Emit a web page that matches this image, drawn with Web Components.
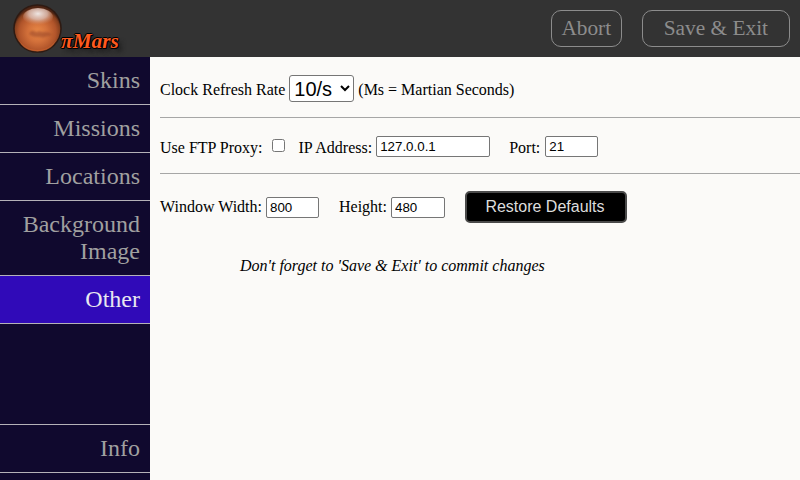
<!DOCTYPE html>
<html>
<head>
<meta charset="utf-8">
<style>
html, body { margin: 0; height: 100%; }
body { width: 800px; height: 480px; overflow: hidden; font-family: "Liberation Serif", serif; }
</style>
</head>
<body>
<mars-app></mars-app>
<script>
class MarsLogo extends HTMLElement {
  constructor() {
    super();
    this.attachShadow({ mode: "open" }).innerHTML = `
      <style>
        :host { display: flex; align-items: flex-start; width: 130px; height: 57px; box-sizing: border-box; padding: 4px 0 0 13px; }
        svg { display: block; flex: none; }
        span {
          margin: 26px 0 0 -1px;
          font: italic bold 21.33px/22px "Liberation Serif", serif;
          color: #ff5a1e;
          text-shadow: 1px 0 0 #000, -1px 0 0 #000, 0 1px 0 #000, 0 -1px 0 #000, 1px 1px 0 #000, 4px 4px 4px #1a1a1a;
        }
      </style>
      <svg width="49" height="49" viewBox="0 0 49 49">
        <defs>
          <radialGradient id="body" cx="50%" cy="58%" r="54%">
            <stop offset="0" stop-color="#ea8a48"/>
            <stop offset=".4" stop-color="#d2703a"/>
            <stop offset=".75" stop-color="#b0542a"/>
            <stop offset=".92" stop-color="#86401e"/>
            <stop offset="1" stop-color="#4e2413"/>
          </radialGradient>
          <radialGradient id="shine" cx="50%" cy="32%" r="62%">
            <stop offset="0" stop-color="#eee6e3"/>
            <stop offset=".5" stop-color="#dcc0b6" stop-opacity=".8"/>
            <stop offset="1" stop-color="#d08f6e" stop-opacity="0"/>
          </radialGradient>
          <filter id="soft" x="-20%" y="-20%" width="140%" height="140%"><feGaussianBlur stdDeviation=".8"/></filter>
        </defs>
        <circle cx="24.5" cy="24.5" r="24.3" fill="#2e1a12"/>
        <circle cx="24.5" cy="24.5" r="22.8" fill="url(#body)"/>
        <ellipse cx="25" cy="13" rx="15" ry="9" fill="url(#shine)"/>
        <g fill="#9c4a2a" opacity=".6" filter="url(#soft)">
          <path d="M16 30c1-3 3-4 5-3l2 1 3-1 3 1 4 0c2 0 5 1 6 3-2 1-5 1-7 2-3 1-5 0-8 0s-6-1-8-3z"/>
        </g>
        <path d="M6 36c4 6 10 10 18.500 10S39 42 43 36c-3 8-10 11.500-18.500 11.500S9 44 6 36z" fill="#d0662e" opacity=".6"/>
      </svg>
      <span>πMars</span>`;
  }
}
customElements.define("mars-logo", MarsLogo);

class HeaderButton extends HTMLElement {
  constructor() {
    super();
    this.attachShadow({ mode: "open" }).innerHTML = `
      <style>
        :host {
          display: block; box-sizing: border-box; height: 37px; padding: 0 9.6px;
          border: 1px solid #8c8c8c; border-radius: 10px;
          color: #8c8c8c; font: 21.33px/34px "Liberation Serif", serif;
        }
      </style>
      <slot></slot>`;
  }
}
customElements.define("header-button", HeaderButton);

class TopBar extends HTMLElement {
  constructor() {
    super();
    this.attachShadow({ mode: "open" }).innerHTML = `
      <style>
        :host { display: flex; align-items: center; height: 57px; background: #333; }
        .actions { display: flex; gap: 20px; margin-left: auto; padding: 0 10px 0 0; margin-top: -1px; }
        header-button:last-child { padding: 0 21px; }
      </style>
      <mars-logo></mars-logo>
      <div class="actions">
        <header-button>Abort</header-button>
        <header-button>Save &amp; Exit</header-button>
      </div>`;
  }
}
customElements.define("top-bar", TopBar);

class NavItem extends HTMLElement {
  constructor() {
    super();
    this.attachShadow({ mode: "open" }).innerHTML = `
      <style>
        :host {
          display: block; box-sizing: border-box; padding: 10px;
          border-bottom: 1px solid #b5b2b8;
          color: #a0a0a0; text-align: right; font: 24px/27px "Liberation Serif", serif;
        }
        :host([selected]) { background: #300ab8; color: #e8e8f0; }
      </style>
      <slot></slot>`;
  }
}
customElements.define("nav-item", NavItem);

class SideNav extends HTMLElement {
  constructor() {
    super();
    this.attachShadow({ mode: "open" }).innerHTML = `
      <style>
        :host { display: flex; flex-direction: column; flex: none; width: 150px; background: #10092e; }
        .space { flex: 1; border-bottom: 1px solid #b5b2b8; }
        .info { margin-bottom: 7px; }
      </style>
      <nav-item>Skins</nav-item>
      <nav-item>Missions</nav-item>
      <nav-item>Locations</nav-item>
      <nav-item>Background Image</nav-item>
      <nav-item selected>Other</nav-item>
      <div class="space"></div>
      <nav-item class="info">Info</nav-item>`;
  }
}
customElements.define("side-nav", SideNav);

class SettingRow extends HTMLElement {
  constructor() {
    super();
    this.attachShadow({ mode: "open" }).innerHTML = `
      <style>
        :host { display: flex; align-items: center; white-space: nowrap; font: 16px/18px "Liberation Serif", serif; color: #000; }
      </style>
      <slot></slot>`;
  }
}
customElements.define("setting-row", SettingRow);

class OtherSettings extends HTMLElement {
  constructor() {
    super();
    this.attachShadow({ mode: "open" }).innerHTML = `
      <style>
        :host { display: block; flex: 1; background: #fbfaf8; padding: 18px 0 0 10px; font: 16px/18px "Liberation Serif", serif; }
        hr { height: 1px; margin: 0; border: 0; background: #a6a6a6; }
        .first { height: 27px; margin-bottom: 15px; }
        .first span { padding-top: 2px; }
        .second { height: 21px; margin: 18px 0 16px; }
        .second span { padding-top: 2px; }
        .third { height: 32px; margin-top: 17px; }
        input[type=text] {
          box-sizing: border-box; height: 21px; padding: 1px 3px; margin: 0;
          border: 1px solid #767676; border-radius: 2px; background: #fff;
          font: 13.33px "Liberation Sans", Arial, sans-serif; color: #000;
        }
        input[type=checkbox] { width: 13px; height: 13px; margin: 0 14px 3px 9px; }
        select {
          width: 65px; height: 27px; margin: 0 4px 0 4px; padding: 0;
          font: 20px "Liberation Sans", Arial, sans-serif; color: #000;
          background: #fff; border: 1px solid #767676; border-radius: 3px;
        }
        .lbl { margin-right: 4px; }
        button {
          box-sizing: border-box; width: 162px; height: 32px; margin-left: 20px; padding: 0 2px 0 0;
          background: #000; color: #ddd; border: 2px solid #4a4a4a; border-radius: 5px;
          font: 16px "Liberation Sans", Arial, sans-serif;
        }
        p { margin: 34px 0 0 80px; font-style: italic; }
      </style>
      <setting-row class="first">
        <span>Clock Refresh Rate</span>
        <select><option>10/s</option></select>
        <span>(Ms = Martian Seconds)</span>
      </setting-row>
      <hr>
      <setting-row class="second">
        <span>Use FTP Proxy:</span>
        <input type="checkbox">
        <span class="lbl">IP Address:</span>
        <input type="text" value="127.0.0.1" style="width:114px;margin-right:19px">
        <span class="lbl">Port:</span>
        <input type="text" value="21" style="width:53px;margin-left:1px">
      </setting-row>
      <hr>
      <setting-row class="third">
        <span class="lbl">Window Width:</span>
        <input type="text" value="800" style="width:53px;margin-right:20px">
        <span class="lbl">Height:</span>
        <input type="text" value="480" style="width:54px">
        <button>Restore Defaults</button>
      </setting-row>
      <p>Don't forget to 'Save &amp; Exit' to commit changes</p>`;
  }
}
customElements.define("other-settings", OtherSettings);

class MarsApp extends HTMLElement {
  constructor() {
    super();
    this.attachShadow({ mode: "open" }).innerHTML = `
      <style>
        :host { display: flex; flex-direction: column; width: 800px; height: 480px; }
        .content { display: flex; flex: 1; min-height: 0; }
      </style>
      <top-bar></top-bar>
      <div class="content">
        <side-nav></side-nav>
        <other-settings></other-settings>
      </div>`;
  }
}
customElements.define("mars-app", MarsApp);
</script>
</body>
</html>
